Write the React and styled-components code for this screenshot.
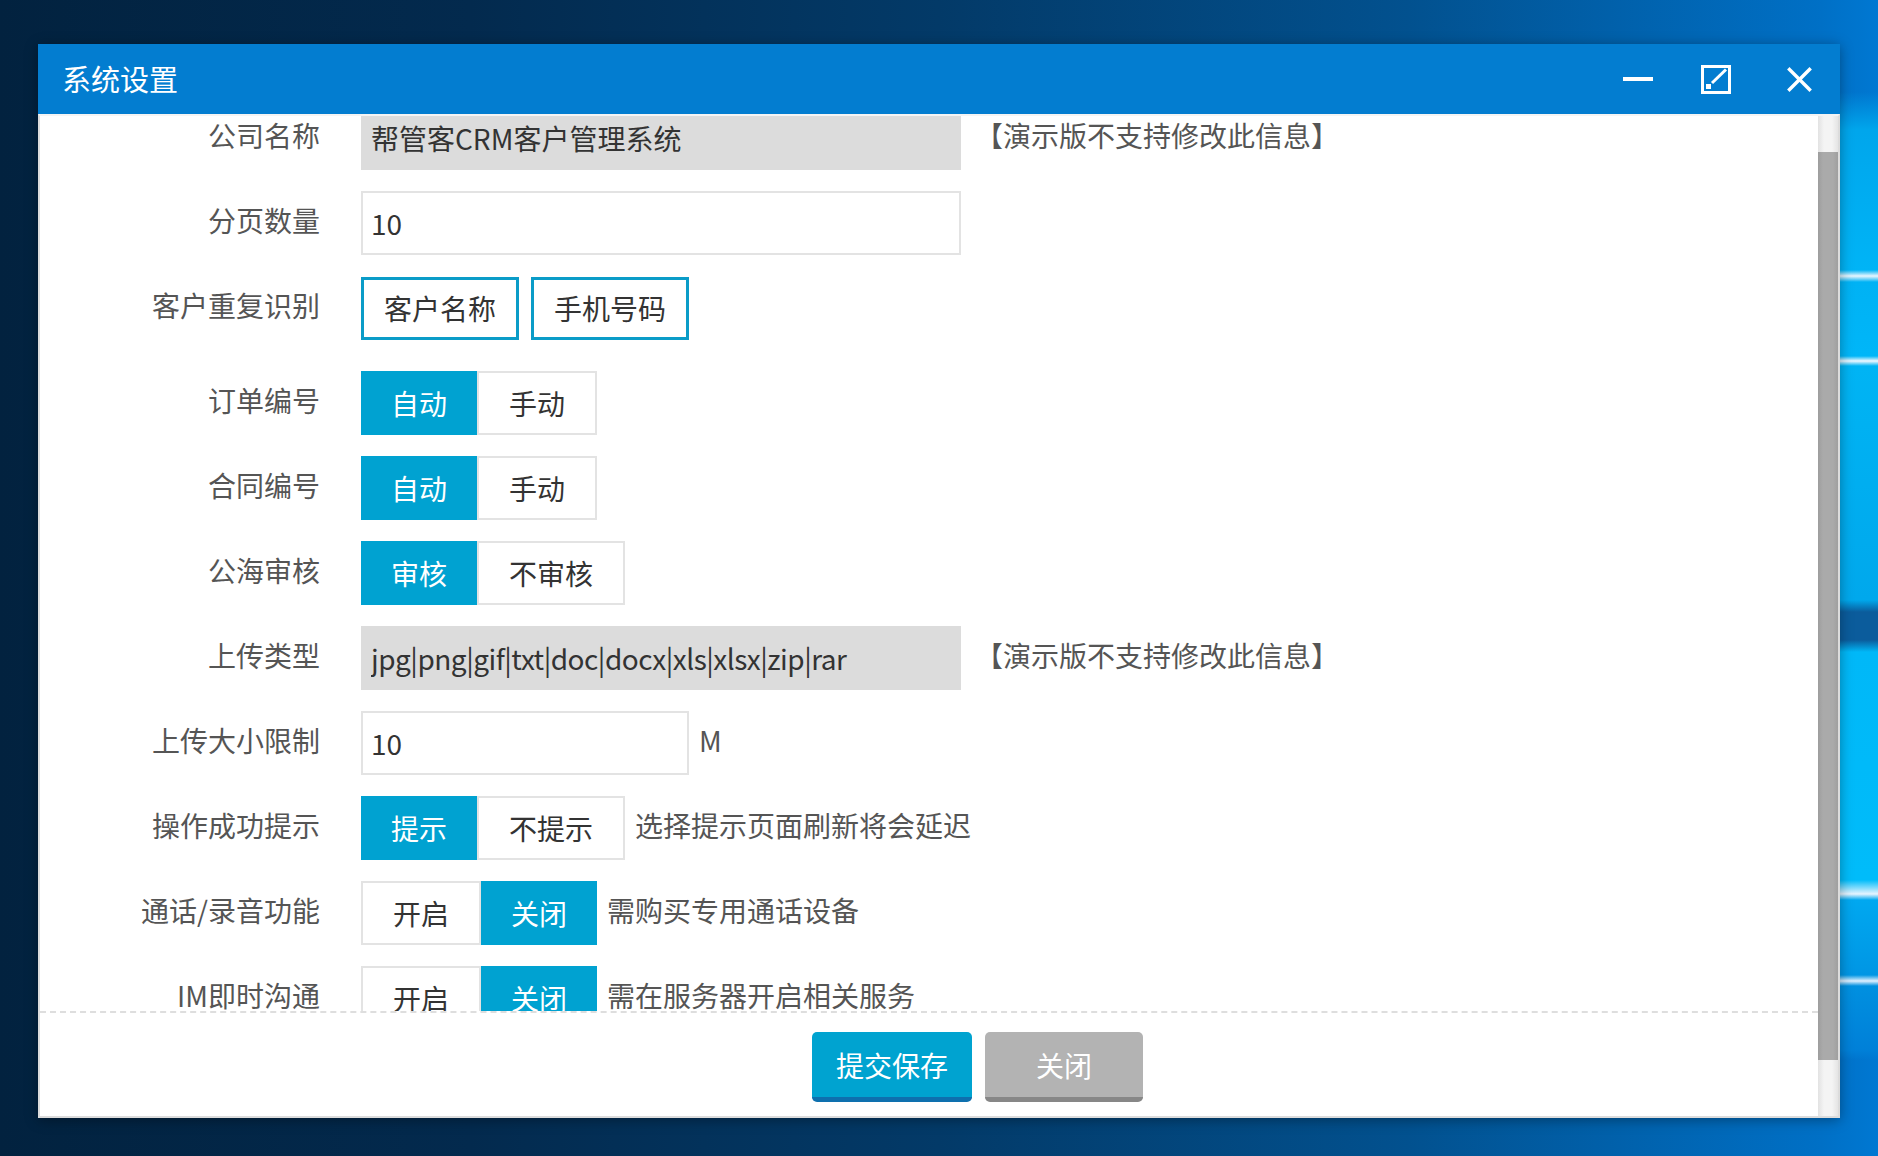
import React, { useLayoutEffect, useRef } from 'react';
import styled, { createGlobalStyle } from 'styled-components';

const GlobalStyle = createGlobalStyle`
  html, body {
    margin: 0;
    padding: 0;
  }
  body {
    font-family: "Noto Sans CJK SC", "Noto Sans", sans-serif;
  }
  * {
    box-sizing: border-box;
  }
`;

const Desktop = styled.div`
  width: 1878px;
  height: 1156px;
  padding: 44px 38px 38px;
  overflow: hidden;
  background:
    linear-gradient(180deg,
      transparent 0, transparent 92px,
      #00a6ec 130px, #00b4f6 270px, #e8f6ff 276px, #00b2f4 282px,
      #00b6f8 356px, #f0f8ff 361px, #00b4f4 366px,
      #00a8ec 600px, #0b5c9c 612px, #0b5c9c 640px, #00b8f8 652px,
      #00bcfa 880px, #e6f4ff 894px, #00a8f0 900px,
      #0096e4 975px, #e0f0ff 981px, #0090e0 986px,
      #0080d8 1050px, transparent 1060px) right top / 38px 100% no-repeat,
    linear-gradient(90deg, #02223f 0%, #032a4e 25%, #033a68 50%, #02518f 75%, #0070c6 97%, #0078d2 100%);
`;

const Window = styled.div`
  width: 1802px;
  height: 1074px;
  display: flex;
  flex-direction: column;
  background: #fff;
  box-shadow: 0 2px 12px rgba(0, 0, 0, 0.35);
`;

const TitleBar = styled.div`
  flex: none;
  height: 70px;
  display: flex;
  align-items: center;
  padding: 0 28px 0 24px;
  background: #037dd0;
  color: #fff;
`;

const Title = styled.div`
  flex: 1;
  font-size: 29px;
  line-height: 1;
  padding-bottom: 2px;
`;

const Controls = styled.div`
  display: flex;
  align-items: center;
`;

const IconButton = styled.div`
  display: flex;
  align-items: center;
  justify-content: center;
  margin-left: ${(p) => p.$gap || 0}px;
  cursor: pointer;
`;

const Body = styled.div`
  flex: 1;
  min-height: 0;
  display: flex;
  border: 2px solid #dcdcdc;
  border-top-color: #f4f4f4;
`;

const Main = styled.div`
  flex: 1;
  min-width: 0;
  display: flex;
  flex-direction: column;
`;

const FormScroll = styled.div`
  flex: 1;
  min-height: 0;
  overflow: hidden;
`;

const Form = styled.div`
  padding-bottom: 60px;
`;

const Row = styled.div`
  display: flex;
  align-items: center;
  height: 64px;
  margin-bottom: ${(p) => (p.$extra ? 31 : 21)}px;
`;

const Label = styled.div`
  flex: none;
  width: 280px;
  margin-right: 41px;
  text-align: right;
  font-size: 28px;
  color: #555;
  padding-bottom: 6px;
`;

const TextInput = styled.input`
  width: ${(p) => p.$w || 600}px;
  height: 64px;
  padding: 0 8px;
  border: 2px solid ${(p) => (p.disabled ? '#dcdcdc' : '#e3e3e3')};
  background: ${(p) => (p.disabled ? '#dcdcdc' : '#fff')};
  color: #333;
  -webkit-text-fill-color: #333;
  font-family: inherit;
  font-size: 28px;
  letter-spacing: ${(p) => p.$tight ? '-0.5px' : 'normal'};
  outline: none;
  opacity: 1;
`;

const Hint = styled.span`
  margin-left: ${(p) => p.$gap || 10}px;
  font-size: 28px;
  color: #555;
  padding-bottom: 6px;
  white-space: nowrap;
`;

const CheckOption = styled.button`
  width: 158px;
  height: 63px;
  margin-right: 12px;
  border: 3px solid #0a9cc8;
  background: #fff;
  color: #333;
  font-family: inherit;
  font-size: 28px;
  padding: 0;
  cursor: pointer;
`;

const Segmented = styled.div`
  display: flex;
  height: 64px;
`;

const Seg = styled.button`
  height: 64px;
  padding: 0 30px;
  border: ${(p) => (p.$active ? 'none' : '2px solid #e3e3e3')};
  background: ${(p) => (p.$active ? '#00a2d1' : '#fff')};
  color: ${(p) => (p.$active ? '#fff' : '#333')};
  font-family: inherit;
  font-size: 28px;
  cursor: pointer;
`;

const Footer = styled.div`
  flex: none;
  height: 105px;
  border-top: 2px dashed #dedede;
  padding: 19px 0 0 97px;
  display: flex;
  justify-content: center;
  align-items: flex-start;
  gap: 13px;
`;

const FooterButton = styled.button`
  width: ${(p) => p.$w}px;
  height: 70px;
  border: none;
  border-radius: 5px;
  border-bottom: 5px solid ${(p) => (p.$primary ? '#0e70ae' : '#878787')};
  background: ${(p) => (p.$primary ? '#00a3d0' : '#b3b3b3')};
  color: #fff;
  font-family: inherit;
  font-size: 28px;
  padding: 0;
  cursor: pointer;
`;

const ScrollTrack = styled.div`
  flex: none;
  width: 20px;
  display: flex;
  flex-direction: column;
  background: linear-gradient(90deg, #e2e2e2, #f4f4f4 30%, #f4f4f4 70%, #e4e4e4);
`;

const Thumb = styled.div`
  margin-top: 36px;
  height: 908px;
  background: linear-gradient(90deg, #9d9d9d, #aaaaaa 25%, #aaaaaa 75%, #9f9f9f);
`;

const MinIcon = () => (
  <svg width="30" height="6" viewBox="0 0 30 6">
    <rect x="0" y="1" width="30" height="4" fill="#fff" />
  </svg>
);

const MaxIcon = () => (
  <svg width="30" height="29" viewBox="0 0 30 29" fill="none" stroke="#fff">
    <rect x="1.5" y="1.5" width="27" height="26" strokeWidth="3" />
    <rect x="5" y="19" width="5" height="5" fill="#fff" stroke="none" />
    <line x1="11" y1="18" x2="25" y2="4.5" strokeWidth="3" />
  </svg>
);

const CloseIcon = () => (
  <svg width="25" height="25" viewBox="0 0 25 25" stroke="#fff" strokeWidth="3.4" strokeLinecap="square">
    <line x1="2.5" y1="2.5" x2="22.5" y2="22.5" />
    <line x1="22.5" y1="2.5" x2="2.5" y2="22.5" />
  </svg>
);

function Toggle({ options, active }) {
  return (
    <Segmented>
      {options.map((o, i) => (
        <Seg key={o} $active={i === active}>{o}</Seg>
      ))}
    </Segmented>
  );
}

export default function App() {
  const scrollRef = useRef(null);

  useLayoutEffect(() => {
    if (scrollRef.current) scrollRef.current.scrollTop = 10;
  }, []);

  return (
    <>
      <GlobalStyle />
      <Desktop>
        <Window>
          <TitleBar>
            <Title>系统设置</Title>
            <Controls>
              <IconButton><MinIcon /></IconButton>
              <IconButton $gap={48}><MaxIcon /></IconButton>
              <IconButton $gap={56}><CloseIcon /></IconButton>
            </Controls>
          </TitleBar>
          <Body>
            <Main>
              <FormScroll ref={scrollRef}>
                <Form>
                  <Row>
                    <Label>公司名称</Label>
                    <TextInput disabled defaultValue="帮管客CRM客户管理系统" />
                    <Hint $gap={14}>【演示版不支持修改此信息】</Hint>
                  </Row>
                  <Row>
                    <Label>分页数量</Label>
                    <TextInput defaultValue="10" />
                  </Row>
                  <Row $extra>
                    <Label>客户重复识别</Label>
                    <CheckOption>客户名称</CheckOption>
                    <CheckOption>手机号码</CheckOption>
                  </Row>
                  <Row>
                    <Label>订单编号</Label>
                    <Toggle options={['自动', '手动']} active={0} />
                  </Row>
                  <Row>
                    <Label>合同编号</Label>
                    <Toggle options={['自动', '手动']} active={0} />
                  </Row>
                  <Row>
                    <Label>公海审核</Label>
                    <Toggle options={['审核', '不审核']} active={0} />
                  </Row>
                  <Row>
                    <Label>上传类型</Label>
                    <TextInput $tight disabled defaultValue="jpg|png|gif|txt|doc|docx|xls|xlsx|zip|rar" />
                    <Hint $gap={14}>【演示版不支持修改此信息】</Hint>
                  </Row>
                  <Row>
                    <Label>上传大小限制</Label>
                    <TextInput $w={328} defaultValue="10" />
                    <Hint>M</Hint>
                  </Row>
                  <Row>
                    <Label>操作成功提示</Label>
                    <Toggle options={['提示', '不提示']} active={0} />
                    <Hint>选择提示页面刷新将会延迟</Hint>
                  </Row>
                  <Row>
                    <Label>通话/录音功能</Label>
                    <Toggle options={['开启', '关闭']} active={1} />
                    <Hint>需购买专用通话设备</Hint>
                  </Row>
                  <Row>
                    <Label>IM即时沟通</Label>
                    <Toggle options={['开启', '关闭']} active={1} />
                    <Hint>需在服务器开启相关服务</Hint>
                  </Row>
                </Form>
              </FormScroll>
              <Footer>
                <FooterButton $primary $w={160}>提交保存</FooterButton>
                <FooterButton $w={158}>关闭</FooterButton>
              </Footer>
            </Main>
            <ScrollTrack>
              <Thumb />
            </ScrollTrack>
          </Body>
        </Window>
      </Desktop>
    </>
  );
}
